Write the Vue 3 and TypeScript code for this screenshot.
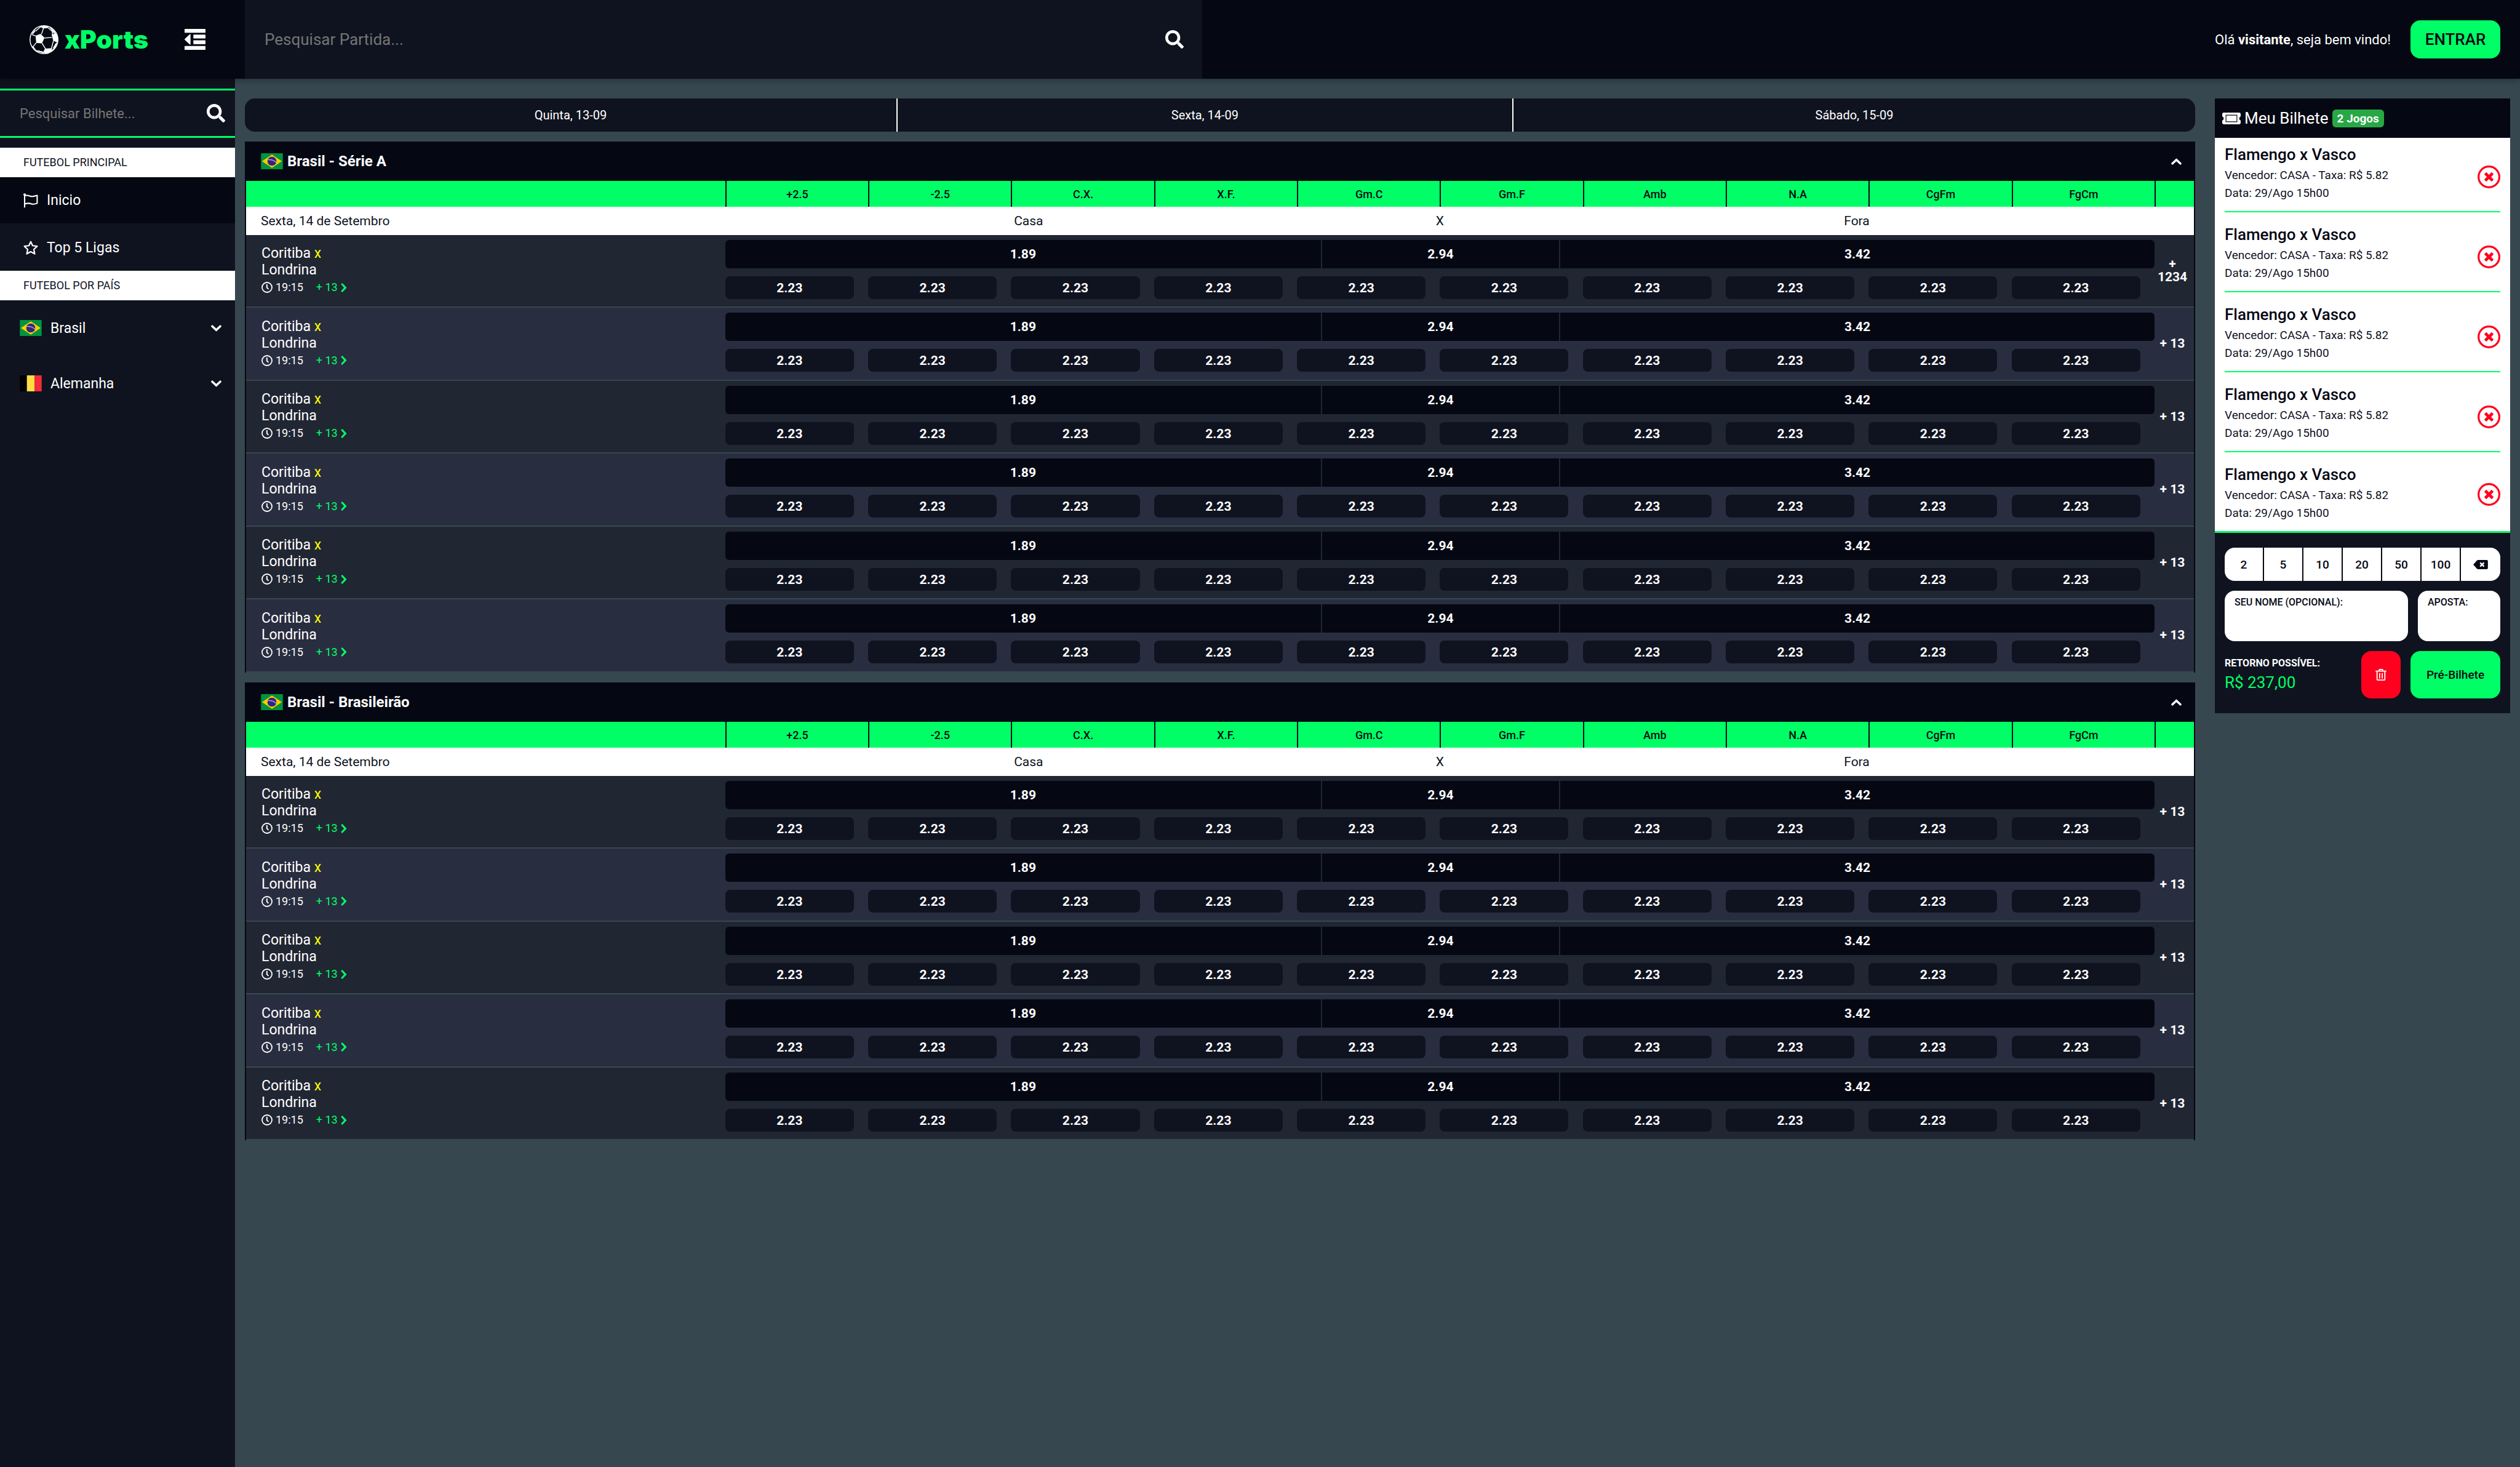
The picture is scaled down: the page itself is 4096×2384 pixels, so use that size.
<script setup lang="ts">
import { ref } from 'vue'

interface Game {
  id: number
  home: string
  away: string
  time: string
  main: string[]
  odds: string[]
  more: string
}

interface League {
  name: string
  date: string
  games: Game[]
}

const days = ['Quinta, 13-09', 'Sexta, 14-09', 'Sábado, 15-09']
const markets = ['+2.5', '-2.5', 'C.X.', 'X.F.', 'Gm.C', 'Gm.F', 'Amb', 'N.A', 'CgFm', 'FgCm']

const makeGames = (more: string[]): Game[] =>
  more.map((value, id) => ({
    id,
    home: 'Coritiba',
    away: 'Londrina',
    time: '19:15',
    main: ['1.89', '2.94', '3.42'],
    odds: markets.map(() => '2.23'),
    more: value,
  }))

const leagues: League[] = [
  { name: 'Brasil - Série A', date: 'Sexta, 14 de Setembro', games: makeGames(['1234', '13', '13', '13', '13', '13']) },
  { name: 'Brasil - Brasileirão', date: 'Sexta, 14 de Setembro', games: makeGames(['13', '13', '13', '13', '13']) },
]

const bets = Array.from({ length: 5 }, (_, id) => ({
  id,
  title: 'Flamengo x Vasco',
  pick: 'Vencedor: CASA - Taxa: R$ 5.82',
  date: 'Data: 29/Ago 15h00',
}))

const stakes = ['2', '5', '10', '20', '50', '100']

const matchQuery = ref('')
const ticketQuery = ref('')
const customer = ref('')
const stake = ref('')
</script>

<template>
  <div class="page">
    <header class="topbar">
      <div class="brand">
        <a class="logo" href="#">
          <svg class="ball" viewBox="0 0 58 58" aria-hidden="true">
            <circle cx="29" cy="29" r="28" fill="none" stroke="#fff" stroke-width="1.8" />
            <g fill="#fff">
              <path d="M12 21 22 17.300 30 25 25 36.500 13.500 35.500z" />
              <path d="M44.500 19.500 52 15 57 23 57.500 32 55 34.500 47.500 31z" />
              <path d="M20 3 29 .500 39 3 36.500 5.500 28 6.500z" />
              <path d="M31 47 45.500 46 44 53 36 57.500 27 55z" />
              <path d="M1 31 4 41 8 43 8 47 2 38z" />
              <path d="M6 15 12 8 11 13 5 20z" />
            </g>
            <g fill="none" stroke="#fff" stroke-width="1.800">
              <path d="M28 6 24 18M37 5 46 13 45.500 20M30 25.500 45 24.500M25 36 32 47.500M48 31 44 46.500M12 21.500 5 19M13.500 35 7 43M46 13 50 16M22 3 12 12M7 43 13 51 27 54M44 52 52 43 56 34M40 4 52 15" />
              <path d="M16 51.500 28 54.500M48 46 54 36M44 8 50 14" stroke-width="2.500" />
            </g>
          </svg>
          <span class="logo-text">xPorts</span>
        </a>
        <button class="icon-button" type="button" aria-label="Recolher menu">
          <svg class="outdent" viewBox="0 0 44 44" aria-hidden="true">
            <g fill="#fff">
              <rect width="44" height="8" rx="1" />
              <rect x="18.500" y="12" width="25.500" height="8" rx="1" />
              <rect x="18.500" y="24" width="25.500" height="8" rx="1" />
              <rect y="36" width="44" height="8" rx="1" />
              <path d="M12.500 11.500v21q-1 1-2 0L.500 23q-1-1 0-2L10.500 11.500q1-1 2 0z" />
            </g>
          </svg>
        </button>
      </div>
      <form class="match-search" @submit.prevent>
        <input v-model="matchQuery" type="text" placeholder="Pesquisar Partida..." aria-label="Pesquisar Partida" />
        <button class="icon-button" type="submit" aria-label="Pesquisar">
          <svg class="search-icon" viewBox="0 0 512 512" aria-hidden="true">
            <path fill="#fff" d="M505 442.700L405.300 343c-4.500-4.500-10.600-7-17-7H372c27.600-35.300 44-79.700 44-128C416 93.100 322.900 0 208 0S0 93.100 0 208s93.100 208 208 208c48.300 0 92.700-16.400 128-44v16.300c0 6.400 2.500 12.500 7 17l99.700 99.700c9.400 9.400 24.600 9.400 33.900 0l28.300-28.300c9.400-9.400 9.400-24.600.1-34zM208 336c-70.700 0-128-57.200-128-128 0-70.700 57.200-128 128-128 70.700 0 128 57.200 128 128 0 70.700-57.200 128-128 128z" />
          </svg>
        </button>
      </form>
      <div class="account">
        <span>Olá <b>visitante</b>, seja bem vindo!</span>
        <button class="login" type="button">ENTRAR</button>
      </div>
    </header>

    <div class="body">
      <nav class="sidebar">
        <form class="ticket-search" @submit.prevent>
          <input v-model="ticketQuery" type="text" placeholder="Pesquisar Bilhete..." aria-label="Pesquisar Bilhete" />
          <button class="icon-button" type="submit" aria-label="Pesquisar">
            <svg class="search-icon" viewBox="0 0 512 512" aria-hidden="true">
              <path fill="#fff" d="M505 442.700L405.300 343c-4.500-4.500-10.600-7-17-7H372c27.600-35.300 44-79.700 44-128C416 93.100 322.900 0 208 0S0 93.100 0 208s93.100 208 208 208c48.300 0 92.700-16.400 128-44v16.300c0 6.400 2.500 12.500 7 17l99.700 99.700c9.400 9.400 24.600 9.400 33.900 0l28.300-28.300c9.400-9.400 9.400-24.600.1-34zM208 336c-70.700 0-128-57.200-128-128 0-70.700 57.200-128 128-128 70.700 0 128 57.200 128 128 0 70.700-57.200 128-128 128z" />
            </svg>
          </button>
        </form>

        <h2 class="menu-title">FUTEBOL PRINCIPAL</h2>
        <a class="menu-link active" href="#">
          <svg class="menu-icon" viewBox="0 0 30 30" aria-hidden="true">
            <path d="M2.500 2V29M2.500 5.500C9 2 14 7.500 19 6.500 23 6 26 4.500 28 4.500V20.500C23 22.500 20 23 16 21.500 11 19.500 7 20.500 2.500 22" fill="none" stroke="#fff" stroke-width="2.600" stroke-linejoin="round" />
            <circle cx="2.500" cy="2.800" r="2.500" fill="#fff" />
          </svg>
          Inicio
        </a>
        <a class="menu-link" href="#">
          <svg class="menu-icon" viewBox="0 0 30 30" aria-hidden="true">
            <path d="M15 2.200 18.800 10.300 28 11.500 21.300 17.800 23 27 15 22.600 7 27 8.700 17.800 2 11.500 11.200 10.300z" fill="none" stroke="#fff" stroke-width="2.800" stroke-linejoin="round" />
          </svg>
          Top 5 Ligas
        </a>

        <h2 class="menu-title">FUTEBOL POR PAÍS</h2>
        <button class="country" type="button">
          <svg class="flag" viewBox="0 0 45 33" aria-hidden="true">
            <rect width="45" height="33" fill="#009440" />
            <path d="M22.500 3 43 16.500 22.500 30 2 16.500z" fill="#ffcb00" />
            <circle cx="22.500" cy="16.500" r="9.300" fill="#302681" />
            <path d="M14 13.500Q24 12 31.500 19" fill="none" stroke="#a9a6cf" stroke-width="1.800" />
          </svg>
          <span>Brasil</span>
          <svg class="chevron" viewBox="0 0 21 13" aria-hidden="true">
            <path d="M2.500 2.500 10.500 10 18.500 2.500" fill="none" stroke="#fff" stroke-width="4.400" stroke-linecap="round" />
          </svg>
        </button>
        <button class="country" type="button">
          <svg class="flag" viewBox="0 0 45 33" aria-hidden="true">
            <rect width="15" height="33" fill="#000" />
            <rect x="14.500" width="16" height="33" fill="#fddd42" />
            <rect x="30.500" width="14.500" height="33" fill="#f62a3a" />
          </svg>
          <span>Alemanha</span>
          <svg class="chevron" viewBox="0 0 21 13" aria-hidden="true">
            <path d="M2.500 2.500 10.500 10 18.500 2.500" fill="none" stroke="#fff" stroke-width="4.400" stroke-linecap="round" />
          </svg>
        </button>
      </nav>

      <div class="content">
        <main class="games">
          <div class="days">
            <button v-for="day in days" :key="day" type="button">{{ day }}</button>
          </div>

          <section v-for="league in leagues" :key="league.name" class="league">
            <div class="league-head">
              <svg class="flag" viewBox="0 0 45 33" aria-hidden="true">
                <rect width="45" height="33" fill="#009440" />
                <path d="M22.500 3 43 16.500 22.500 30 2 16.500z" fill="#ffcb00" />
                <circle cx="22.500" cy="16.500" r="9.300" fill="#302681" />
                <path d="M14 13.500Q24 12 31.500 19" fill="none" stroke="#a9a6cf" stroke-width="1.800" />
              </svg>
              <h2>{{ league.name }}</h2>
              <button class="icon-button" type="button" :aria-label="'Recolher ' + league.name">
                <svg class="chevron" viewBox="0 0 21 13" aria-hidden="true">
                  <path d="M2.500 10.500 10.500 3 18.500 10.500" fill="none" stroke="#fff" stroke-width="4.400" stroke-linecap="round" />
                </svg>
              </button>
            </div>
            <table>
              <colgroup>
                <col class="col-game" />
                <col v-for="market in markets" :key="market" />
                <col class="col-more" />
              </colgroup>
              <thead>
                <tr>
                  <th></th>
                  <th v-for="market in markets" :key="market" scope="col">{{ market }}</th>
                  <th></th>
                </tr>
              </thead>
              <tbody>
                <tr class="date-row">
                  <td class="date">{{ league.date }}</td>
                  <td :colspan="markets.length">
                    <div class="sides">
                      <span class="side-home">Casa</span>
                      <span>X</span>
                      <span>Fora</span>
                    </div>
                  </td>
                  <td></td>
                </tr>
              </tbody>
              <tbody>
                <tr v-for="game in league.games" :key="game.id" class="game">
                  <td class="info">
                    <div class="team">{{ game.home }} <span class="versus">x</span></div>
                    <div class="team">{{ game.away }}</div>
                    <div class="when">
                      <svg class="clock" viewBox="0 0 22 22" aria-hidden="true">
                        <circle cx="11" cy="11" r="9.800" fill="none" stroke="#fff" stroke-width="2.200" />
                        <path d="M10.800 5V11.500L14 14.500" fill="none" stroke="#fff" stroke-width="2.400" />
                      </svg>
                      <span>{{ game.time }}</span>
                      <a class="extra" href="#">
                        + 13
                        <svg class="next" viewBox="0 0 12 19" aria-hidden="true">
                          <path d="M2.500 2.500 9 9.500 2.500 16.500" fill="none" stroke="#00ff66" stroke-width="4" stroke-linecap="round" />
                        </svg>
                      </a>
                    </div>
                  </td>
                  <td :colspan="markets.length" class="odds">
                    <div class="main-odds">
                      <button v-for="odd in game.main" :key="odd" type="button">{{ odd }}</button>
                    </div>
                    <div class="side-odds">
                      <div v-for="(odd, i) in game.odds" :key="i">
                        <button type="button">{{ odd }}</button>
                      </div>
                    </div>
                  </td>
                  <td class="more"><a href="#">+ {{ game.more }}</a></td>
                </tr>
              </tbody>
            </table>
          </section>
        </main>

        <aside class="ticket">
          <div class="ticket-head">
            <svg class="ticket-icon" viewBox="0 0 38 24" aria-hidden="true">
              <path fill="#fff" fill-rule="evenodd" d="M3 0H35Q38 0 38 3V8Q35 8.500 35 12T38 16V21Q38 24 35 24H3Q0 24 0 21V16Q3 15.500 3 12T0 8V3Q0 0 3 0zM7 4.500V19.500H31V4.500zM8.500 6H29.500V18H8.500z" />
            </svg>
            <h2>Meu Bilhete</h2>
            <span class="badge">2 Jogos</span>
          </div>
          <ul class="bets">
            <li v-for="bet in bets" :key="bet.id">
              <div class="bet">
                <div>
                  <h3>{{ bet.title }}</h3>
                  <p>{{ bet.pick }}</p>
                  <p>{{ bet.date }}</p>
                </div>
                <button class="icon-button" type="button" aria-label="Remover aposta">
                  <svg class="remove" viewBox="0 0 46 46" aria-hidden="true">
                    <circle cx="23" cy="23" r="21" fill="none" stroke="#ff001e" stroke-width="4" />
                    <path d="M15.500 15.500 30.500 30.500M30.500 15.500 15.500 30.500" fill="none" stroke="#ff001e" stroke-width="6" />
                  </svg>
                </button>
              </div>
            </li>
          </ul>
          <div class="checkout">
            <div class="stakes">
              <button v-for="value in stakes" :key="value" type="button" @click="stake = value">{{ value }}</button>
              <button type="button" aria-label="Apagar" @click="stake = ''">
                <svg class="backspace" viewBox="0 0 30 19" aria-hidden="true">
                  <path fill="#050813" d="M9.500 0H27.500Q30 0 30 2.500V16.500Q30 19 27.500 19H9.500Q8.500 19 7.500 18L.700 10.500Q-.200 9.500.700 8.500L7.500 1Q8.500 0 9.500 0z" />
                  <path d="M14 5.500 22 13.500M22 5.500 14 13.500" stroke="#fff" stroke-width="3" />
                </svg>
              </button>
            </div>
            <div class="fields">
              <label class="field name">
                <span>SEU NOME (OPCIONAL):</span>
                <input v-model="customer" type="text" />
              </label>
              <label class="field amount">
                <span>APOSTA:</span>
                <input v-model="stake" type="text" />
              </label>
            </div>
            <div class="actions">
              <div class="payout">
                <strong>RETORNO POSSÍVEL:</strong>
                <span>R$ 237,00</span>
              </div>
              <button class="clear" type="button" aria-label="Limpar bilhete">
                <svg class="trash" viewBox="0 0 22 24" aria-hidden="true">
                  <path d="M0 4.500H22M3 5V21.500Q3 22.800 4.300 22.800H17.700Q19 22.800 19 21.500V5M7 4 8 1.200H14L15 4M8.300 8.500V19.500M13.700 8.500V19.500" fill="none" stroke="#fff" stroke-width="2.300" />
                </svg>
              </button>
              <button class="submit" type="button">Pré-Bilhete</button>
            </div>
          </div>
        </aside>
      </div>
    </div>
  </div>
</template>

<style>
body {
  background: #37474f;
}
</style>

<style scoped>
.page {
  min-height: 100vh;
  display: flex;
  flex-direction: column;
  background: #37474f;
  color: #fff;
  font-family: Roboto, "Liberation Sans", sans-serif;
  font-size: 22px;
}
* {
  box-sizing: border-box;
}
button {
  margin: 0;
  padding: 0;
  border: 0;
  background: none;
  color: inherit;
  font: inherit;
  cursor: pointer;
}
input {
  min-width: 0;
  padding: 0;
  border: 0;
  outline: 0;
  background: none;
  color: inherit;
  font: inherit;
}
input::placeholder {
  color: #757575;
  opacity: 1;
}
a {
  color: inherit;
  text-decoration: none;
}
h2,
h3,
p,
ul {
  margin: 0;
  padding: 0;
  font-size: inherit;
  list-style: none;
}
svg {
  display: block;
  flex: none;
}

/* Top bar */
.topbar {
  position: relative;
  z-index: 1;
  display: flex;
  height: 128px;
  background: #050813;
  box-shadow: 0 2px 10px rgba(0, 0, 0, 0.35);
}
.brand {
  width: 398px;
  padding: 0 64px 0 48px;
  display: flex;
  align-items: center;
  justify-content: space-between;
}
.logo {
  display: flex;
  align-items: center;
  gap: 10px;
}
.ball {
  width: 47px;
  height: 47px;
}
.logo-text {
  color: #00ff66;
  font-family: Inter, sans-serif;
  font-size: 41px;
  font-weight: 900;
  line-height: 48px;
}
.outdent {
  width: 34px;
  height: 34px;
}
.match-search {
  width: 38%;
  padding: 0 30px 0 32px;
  display: flex;
  align-items: center;
  background: #0f131f;
  font-size: 26px;
}
.match-search input,
.ticket-search input {
  flex: 1;
}
.search-icon {
  width: 30px;
  height: 30px;
}
.account {
  flex: 1;
  padding-right: 32px;
  display: flex;
  align-items: center;
  justify-content: flex-end;
  gap: 32px;
}
.login,
.submit {
  width: 146px;
  border-radius: 16px;
  background: #00ff66;
  color: #050813;
  font-weight: 500;
}
.login {
  height: 62px;
  font-size: 26px;
}

/* Side menu */
.body {
  flex: 1;
  display: flex;
}
.sidebar {
  width: 382px;
  padding-top: 16px;
  background: #0f131f;
}
.ticket-search {
  height: 80px;
  margin-bottom: 16px;
  padding: 0 16px 0 32px;
  display: flex;
  align-items: center;
  border: solid #00ff66;
  border-width: 3px 0;
}
.menu-title {
  padding-left: 38px;
  background: #fff;
  color: #0f131f;
  font-size: 18px;
  font-weight: 400;
  line-height: 48px;
}
.menu-link {
  padding-left: 38px;
  display: flex;
  align-items: center;
  gap: 14px;
  font-size: 23px;
  line-height: 75px;
}
.menu-link + .menu-link {
  border-top: 2px solid transparent;
}
.menu-link.active {
  background: #050813;
}
.menu-icon {
  width: 24px;
  height: 24px;
}
.country {
  width: 100%;
  height: 90px;
  padding: 0 22px 0 32px;
  display: flex;
  align-items: center;
  gap: 14px;
  font-size: 23px;
  text-align: left;
}
.country span {
  flex: 1;
}
.flag {
  width: 36px;
  height: 26px;
}
.chevron {
  width: 17px;
  height: 11px;
}

/* Games */
.content {
  flex: 1;
  min-width: 0;
  padding: 32px 16px;
  display: flex;
  align-items: flex-start;
  gap: 32px;
}
.games {
  flex: 1;
  min-width: 0;
  display: flex;
  flex-direction: column;
  gap: 16px;
}
.days {
  display: grid;
  grid-template-columns: 331fr 313fr 347fr;
  border-radius: 16px;
  background: #0f131f;
  font-size: 20px;
}
.days button {
  height: 54px;
}
.days button + button {
  border-left: 2px solid #fff;
}
.league {
  border: solid #050813;
  border-width: 0 2px;
}
.league-head {
  height: 64px;
  padding: 0 20px 0 24px;
  display: flex;
  align-items: center;
  gap: 7px;
  background: #050813;
}
.league-head h2 {
  flex: 1;
  font-size: 24px;
  font-weight: 700;
  line-height: 32px;
}
table {
  width: 100%;
  table-layout: fixed;
  border-spacing: 0;
}
.col-game {
  width: 24.6%;
}
.col-more {
  width: 64px;
}
th,
td {
  padding: 0;
}
th {
  height: 42px;
  background: #00ff66;
  color: #050813;
  font-size: 18px;
  font-weight: 500;
}
th + th {
  border-left: 2px solid #050813;
}
.date-row td {
  height: 46px;
  background: #fff;
  color: #0f131f;
  font-size: 21px;
}
.date-row .date {
  padding-left: 24px;
}
.sides {
  display: grid;
  grid-template-columns: 5fr 2fr 5fr;
  text-align: center;
}
.side-home {
  padding-left: 18px;
}
.game td {
  border-bottom: 2px solid #37474f;
  background: #212633;
}
.game:nth-child(even) td {
  background: #292d40;
}
.info {
  padding-left: 25px;
}
.team {
  font-size: 23px;
  line-height: 27px;
}
.versus {
  color: #ff0;
}
.when {
  display: flex;
  align-items: center;
  font-size: 18px;
  line-height: 30px;
}
.clock {
  width: 18px;
  height: 18px;
  margin-right: 5px;
}
.extra {
  margin-left: 21px;
  display: flex;
  align-items: center;
  gap: 5px;
  color: #00ff66;
}
.next {
  width: 10px;
  height: 15px;
}
.odds {
  padding: 8px 0 12px;
  font-size: 21px;
  font-weight: 700;
}
.game:nth-child(even) .odds {
  padding-bottom: 13px;
}
.main-odds {
  margin-bottom: 13px;
  display: grid;
  grid-template-columns: 5fr 2fr 5fr;
  overflow: hidden;
  border-radius: 6px;
  background: #050813;
}
.main-odds button {
  height: 46px;
}
.main-odds button + button {
  border-left: 2px solid #212633;
}
.side-odds {
  display: grid;
  grid-template-columns: repeat(10, 1fr);
}
.side-odds button {
  display: block;
  width: 90%;
  height: 37px;
  border-radius: 8px;
  background: #0f131f;
}
.game .more {
  padding-right: 6px;
  font-size: 21px;
  font-weight: 700;
  line-height: 21px;
  text-align: center;
}

/* Ticket */
.ticket {
  width: 480px;
  background: #0f131f;
}
.ticket-head {
  height: 64px;
  padding: 0 12px;
  display: flex;
  align-items: center;
  gap: 6px;
  background: #050813;
}
.ticket-head h2 {
  font-size: 26px;
  font-weight: 400;
}
.ticket-icon {
  width: 30px;
  height: 19px;
}
.badge {
  padding: 0 8px;
  border-radius: 6px;
  background: #28a745;
  font-size: 19px;
  font-weight: 700;
  line-height: 29px;
}
.bets {
  padding: 0 16px;
  border-bottom: 3px solid #00ff66;
  background: #fff;
  color: #050813;
}
.bets li {
  padding-top: 17px;
  border-bottom: 2px solid #00ff66;
}
.bets li:first-child {
  padding-top: 8px;
}
.bets li:last-child {
  padding-bottom: 8px;
  border-bottom: 0;
}
.bet {
  padding-bottom: 15px;
  display: flex;
  align-items: center;
  justify-content: space-between;
}
.bets li:last-child .bet {
  padding-bottom: 7px;
}
.bet .icon-button {
  align-self: stretch;
  margin-bottom: -15px;
}
.bets li:last-child .icon-button {
  margin-bottom: -7px;
}
.bet h3 {
  font-size: 26px;
  font-weight: 500;
  line-height: 38px;
}
.bet p {
  color: #0f131f;
  font-size: 19px;
  line-height: 29px;
}
.remove {
  width: 37px;
  height: 37px;
}
.checkout {
  padding: 24px 16px;
  display: flex;
  flex-direction: column;
  gap: 16px;
}
.stakes {
  display: grid;
  grid-template-columns: repeat(7, 1fr);
  overflow: hidden;
  border-radius: 16px;
  background: #fff;
  color: #050813;
  font-size: 19px;
  font-weight: 500;
}
.stakes button {
  height: 54px;
  border-right: 2px solid #050813;
}
.stakes button:last-child {
  border-right: 0;
}
.backspace {
  width: 24px;
  height: 15px;
  margin: 0 auto;
}
.fields {
  display: flex;
  gap: 16px;
}
.field {
  min-width: 0;
  height: 82px;
  padding: 7px 16px;
  display: flex;
  flex-direction: column;
  border-radius: 16px;
  background: #fff;
  color: #050813;
}
.field span {
  font-size: 16px;
  font-weight: 500;
  line-height: 24px;
}
.field input {
  flex: 1;
}
.name {
  flex: 1;
}
.amount {
  width: 134px;
}
.actions {
  height: 77px;
  display: flex;
  gap: 16px;
}
.payout {
  flex: 1;
  display: flex;
  flex-direction: column;
  justify-content: center;
}
.payout strong {
  font-size: 16px;
  line-height: 24px;
}
.payout span {
  color: #00ff66;
  font-size: 26px;
  line-height: 38px;
}
.clear {
  width: 64px;
  border-radius: 16px;
  background: #ff001e;
}
.trash {
  width: 18px;
  height: 19px;
  margin: 0 auto;
}
.submit {
  font-size: 19px;
}
</style>
